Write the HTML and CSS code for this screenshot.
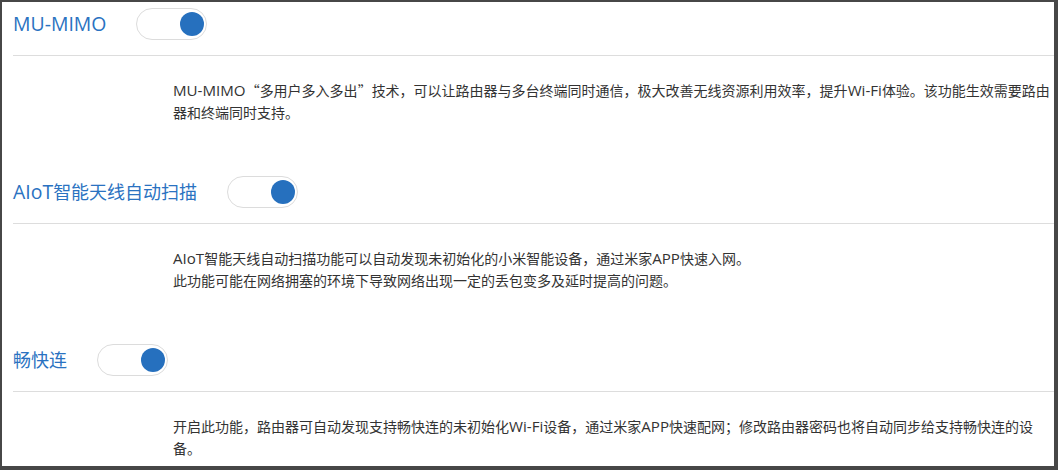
FILE: index.html
```html
<!DOCTYPE html>
<html lang="zh-CN">
<head>
<meta charset="utf-8">
<title>Wi-Fi 设置</title>
<link rel="stylesheet" href="styles.css">
</head>
<body>
<div class="frame">
  <section class="item">
    <div class="item-head">
      <span class="item-title"><span class="en">MU-MIMO</span></span>
      <span class="switch is-on"><span class="knob"></span></span>
    </div>
    <p class="item-desc"><span class="en">MU-MIMO</span><span class="cjk">“</span>多用户多入多出<span class="cjk">”</span>技术，可以让路由器与多台终端同时通信，极大改善无线资源利用效率，提升<span class="en">Wi-Fi</span>体验。该功能生效需要路由器和终端同时支持。</p>
  </section>
  <section class="item">
    <div class="item-head">
      <span class="item-title"><span class="en">AIoT</span>智能天线自动扫描</span>
      <span class="switch is-on"><span class="knob"></span></span>
    </div>
    <p class="item-desc"><span class="en">AIoT</span>智能天线自动扫描功能可以自动发现未初始化的小米智能设备，通过米家<span class="en">APP</span>快速入网。<br>此功能可能在网络拥塞的环境下导致网络出现一定的丢包变多及延时提高的问题。</p>
  </section>
  <section class="item">
    <div class="item-head">
      <span class="item-title">畅快连</span>
      <span class="switch is-on"><span class="knob"></span></span>
    </div>
    <p class="item-desc">开启此功能，路由器可自动发现支持畅快连的未初始化<span class="en">Wi-Fi</span>设备，通过米家<span class="en">APP</span>快速配网；修改路由器密码也将自动同步给支持畅快连的设备。</p>
  </section>
</div>
</body>
</html>
```
FILE: styles.css
```css
html, body {
  margin: 0;
  padding: 0;
  background: #ffffff;
}
body {
  font-family: "Open Sans", "Noto Sans CJK SC", sans-serif;
}
.frame {
  box-sizing: border-box;
  width: 1058px;
  height: 470px;
  overflow: hidden;
  border-style: solid;
  border-color: #474747;
  border-width: 2px 4px 4px 2px;
  padding-left: 11px;
  background: #ffffff;
}
.item {
  margin-bottom: 46px;
}
.item-head {
  display: flex;
  align-items: center;
  height: 32px;
  padding: 6px 0 15px;
  border-bottom: 1px solid #dddddd;
}
.item-title {
  font-size: 18px;
  line-height: 24px;
  color: #2a72c1;
}
.en {
  font-size: 1.08em;
  line-height: 1;
}
.cjk {
  font-family: "Noto Sans CJK SC", sans-serif;
  line-height: 1;
}
.switch {
  box-sizing: border-box;
  width: 71px;
  height: 32px;
  margin-left: 30px;
  border: 1px solid #dcdcdc;
  border-radius: 16px;
  background: #ffffff;
  display: flex;
  align-items: center;
  padding: 0 2px;
}
.switch.is-on {
  justify-content: flex-end;
}
.knob {
  width: 24px;
  height: 24px;
  border-radius: 50%;
  background: #2670be;
}
.item-desc {
  margin: 0;
  padding: 24px 0 0 160px;
  height: 44px;
  font-size: 14px;
  line-height: 22px;
  color: #333333;
}
```
